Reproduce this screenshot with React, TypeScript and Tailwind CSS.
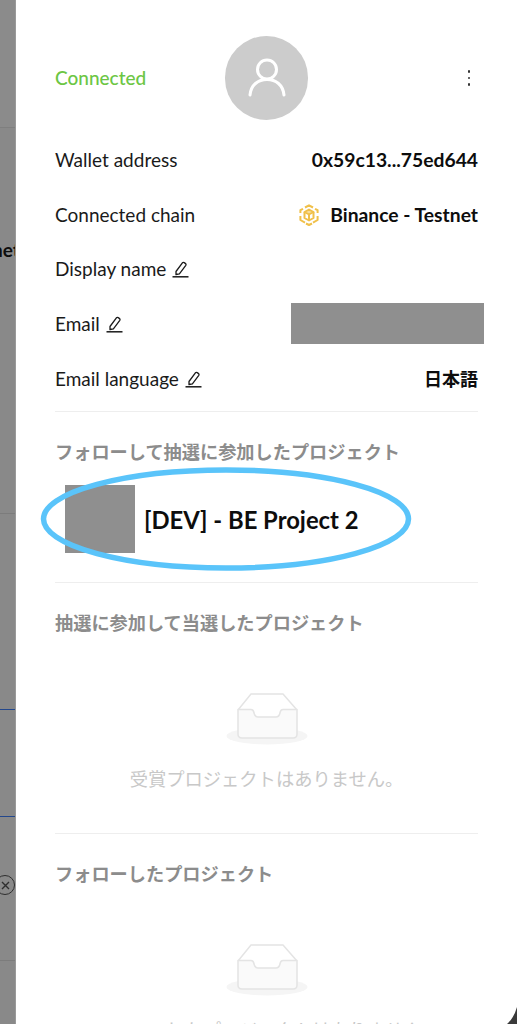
import React from "react";

const FONT = { fontFamily: '"Lato", "Noto Sans CJK JP", sans-serif' };

function Pencil() {
  return (
    <svg width="17" height="17" viewBox="0 0 17 17" fill="none" stroke="#1a1a1a" strokeWidth="1.3" className="ml-[6px] shrink-0">
      <path d="M4 10.5 L10.4 1.8 Q11.2 1 12.2 1.6 L13.6 2.6 Q14.4 3.3 13.8 4.3 L7.4 12.8 L4 13.5 Z" strokeLinejoin="round" />
      <path d="M0.5 15.8 H16.5" strokeWidth="1.5" />
    </svg>
  );
}

function Row({ label, edit, children }: { label: string; edit?: boolean; children?: React.ReactNode }) {
  return (
    <div className="flex h-[54.7px] items-center justify-between">
      <div className="flex items-center text-[19px] text-[#1a1a1a]">
        <span>{label}</span>
        {edit && <Pencil />}
      </div>
      {children}
    </div>
  );
}

function Inbox() {
  return (
    <svg width="82" height="52" viewBox="0 0 82 52" fill="none" className="block">
      <ellipse cx="41" cy="43" rx="40.5" ry="8.5" fill="#f5f5f5" />
      <path d="M12 17 L25 1 H57 L71 17 V41 Q71 45 67 45 H16 Q12 45 12 41 Z" fill="#ffffff" />
      <path d="M12 17 L25 1 H57 L71 17" stroke="#e4e4e4" strokeWidth="1.5" strokeLinejoin="round" />
      <path d="M12 16.5 H25 Q27.5 16.5 28 20 Q29 24 32 24 H50 Q53 24 54 20 Q54.5 16.5 57 16.5 H71 V41 Q71 45 67 45 H16 Q12 45 12 41 Z" fill="#fafafa" stroke="#e4e4e4" strokeWidth="1.5" strokeLinejoin="round" />
    </svg>
  );
}

function BnbIcon() {
  return (
    <svg width="20" height="22" viewBox="0 0 20 22" fill="none" stroke="#f0c04a" strokeWidth="2" strokeLinejoin="round" className="shrink-0">
      <path d="M6 3.5 L10 1.3 L14 3.5" />
      <path d="M1.4 9 V6.2 L4 4.8" />
      <path d="M18.6 9 V6.2 L16 4.8" />
      <path d="M1.4 12 V16 L6 18.6" />
      <path d="M18.6 12 V16 L14 18.6" />
      <path d="M7 19.5 L10 21 L13 19.5" />
      <path d="M5.5 8 L10 5.5 L14.5 8 L10 10.5 Z" fill="#f6dc9a" />
      <path d="M10 10.5 V16.5 M5.5 8 V14 L10 16.5 L14.5 14 V8" />
    </svg>
  );
}

function Heading({ children }: { children: React.ReactNode }) {
  return <h3 className="text-[18.2px] font-bold leading-[24px] text-[#8c8c8c]">{children}</h3>;
}

function Empty({ text }: { text: string }) {
  return (
    <div className="flex flex-col items-center">
      <Inbox />
      <p className="mt-[22px] whitespace-nowrap text-[18.3px] leading-[24px] text-[#c8c8c8]">{text}</p>
    </div>
  );
}

export default function App() {
  return (
    <div className="relative flex h-[1024px] w-[517px] overflow-hidden bg-white" style={FONT}>
      {/* dimmed page behind the drawer */}
      <aside className="relative flex w-[16px] shrink-0 flex-col overflow-hidden border-r border-[#9a9a9a] bg-[#898989]">
        <div className="h-[127px] shrink-0 bg-[#8b8b8b]" />
        <div className="h-px shrink-0 bg-[#7f7f7f]" />
        <span className="absolute left-[-8px] top-[236px] text-[19px] font-bold text-[#0d0d0d]">net</span>
        <div className="absolute left-0 top-[513px] h-px w-full bg-[#7c7c7c]" />
        <div className="absolute left-0 top-[709px] h-px w-full bg-[#23478c]" />
        <div className="absolute left-0 top-[816px] h-px w-full bg-[#23478c]" />
        <div className="absolute left-[-5px] top-[875px] flex h-[20px] w-[20px] items-center justify-center rounded-full border-[1.5px] border-[#2e2e2e]">
          <svg width="9" height="9" viewBox="0 0 9 9" stroke="#2e2e2e" strokeWidth="1.4"><path d="M1 1 L8 8 M8 1 L1 8" /></svg>
        </div>
        <div className="absolute left-0 top-[960px] h-px w-full bg-[#7c7c7c]" />
      </aside>

      {/* drawer */}
      <main className="flex min-w-0 flex-1 flex-col pl-[39px] pr-[39px] pt-[36px] *:shrink-0">
        <header className="relative flex h-[84px] items-center justify-between">
          <span className="text-[19px] font-medium text-[#6cc644]">Connected</span>
          <div className="absolute left-[170px] top-0 flex h-[84px] w-[83px] items-center justify-center rounded-full bg-[#cccccc]">
            <svg width="38" height="40" viewBox="0 0 38 40" fill="none" stroke="#ffffff" strokeWidth="3" strokeLinecap="round">
              <circle cx="19" cy="11.5" r="9.5" />
              <path d="M2 37 C3 27 10 21.5 19 21.5 C28 21.5 35 27 36 37" />
            </svg>
          </div>
          <div className="mr-[8px] flex flex-col gap-[4px]">
            <span className="h-[2.5px] w-[2.5px] rounded-full bg-[#333333]" />
            <span className="h-[2.5px] w-[2.5px] rounded-full bg-[#333333]" />
            <span className="h-[2.5px] w-[2.5px] rounded-full bg-[#333333]" />
          </div>
        </header>

        <section className="mt-[13px]">
          <Row label="Wallet address">
            <span className="text-[19.3px] font-bold text-[#0d0d0d]">0x59c13...75ed644</span>
          </Row>
          <Row label="Connected chain">
            <div className="flex items-center gap-[11px]">
              <BnbIcon />
              <span className="text-[19.3px] font-bold text-[#0d0d0d]">Binance - Testnet</span>
            </div>
          </Row>
          <Row label="Display name" edit />
          <Row label="Email" edit />
          <Row label="Email language" edit>
            <span className="text-[18px] font-bold text-[#0d0d0d]">日本語</span>
          </Row>
        </section>

        <div className="mt-[5px] h-px bg-[#eeeeee]" />

        <section className="pt-[28px]">
          <Heading>フォローして抽選に参加したプロジェクト</Heading>
          <div className="mt-[21px] flex h-[68px] items-center pl-[10px]">
            <div className="h-[68px] w-[70px] bg-[#8f8f8f]" />
            <span className="ml-[9px] pt-[2px] text-[23.8px] font-bold text-[#0d0d0d]">[DEV] - BE Project 2</span>
          </div>
        </section>

        <div className="mt-[29px] h-px bg-[#eeeeee]" />

        <section className="pt-[28px]">
          <Heading>抽選に参加して当選したプロジェクト</Heading>
          <div className="mt-[58px]">
            <Empty text="受賞プロジェクトはありません。" />
          </div>
        </section>

        <div className="mt-[42px] h-px bg-[#eeeeee]" />

        <section className="pt-[28px]">
          <Heading>フォローしたプロジェクト</Heading>
          <div className="mt-[58px]">
            <Empty text="フォローしたプロジェクトはありません。" />
          </div>
        </section>
      </main>

      {/* redaction over email */}
      <div className="absolute left-[291px] top-[303px] h-[41px] w-[193px] bg-[#8f8f8f]" />

      {/* hand-drawn annotation */}
      <svg className="absolute left-[38px] top-[464px]" width="376" height="110" viewBox="0 0 376 110" fill="none">
        <ellipse cx="188" cy="55" rx="182.5" ry="49" stroke="#5ac4fa" strokeWidth="5.5" />
      </svg>

      {/* window corner */}
      <svg className="absolute bottom-0 right-0" width="10" height="17" viewBox="0 0 10 17">
        <path d="M10 0 V17 H0 Q7 11 10 0 Z" fill="#3a3a3a" />
      </svg>
    </div>
  );
}
